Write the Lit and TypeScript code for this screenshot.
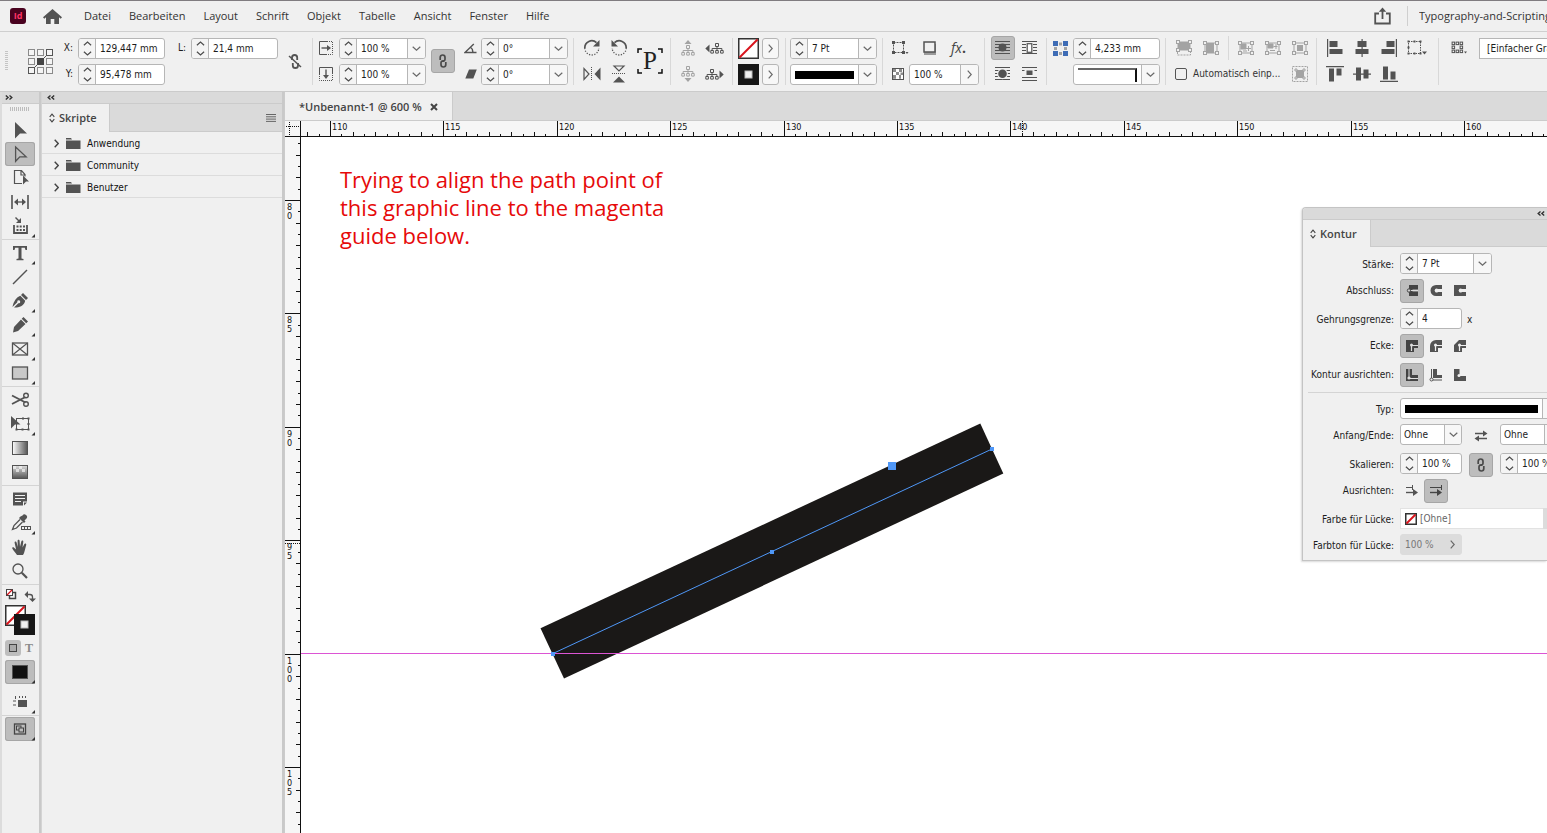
import { LitElement, html, svg, css, nothing } from "lit";
import { customElement } from "lit/decorators.js";

const icon = (w: number, h: number, body: unknown) =>
  html`<svg class="ic" width=${w} height=${h} viewBox="0 0 ${w} ${h}" aria-hidden="true">${body}</svg>`;

const G = "#535353";
const L = "#a3a3a3";

const chevDown = () => icon(9, 5, svg`<path d="M.7 .7L4.5 4.2L8.3 .7" fill="none" stroke="#6a6a6a" stroke-width="1.2"/>`);
const chevRight = () => icon(5, 9, svg`<path d="M.7 .7L4.2 4.5L.7 8.3" fill="none" stroke="#6a6a6a" stroke-width="1.2"/>`);
const spinUp = () => icon(9, 5, svg`<path d="M.9 4.3L4.5 1L8.1 4.3" fill="none" stroke="#4c4c4c" stroke-width="1.2"/>`);
const spinDown = () => icon(9, 5, svg`<path d="M.9 .7L4.5 4L8.1 .7" fill="none" stroke="#4c4c4c" stroke-width="1.2"/>`);
const dblLeft = () => icon(8, 5, svg`<path d="M3.5 .5L1.2 2.5L3.5 4.5M7.2 .5L4.9 2.5L7.2 4.5" fill="none" stroke="#333" stroke-width="1.4"/>`);
const dblRight = () => icon(8, 5, svg`<path d="M.8 .5L3.1 2.5L.8 4.5M4.5 .5L6.8 2.5L4.5 4.5" fill="none" stroke="#333" stroke-width="1.4"/>`);
const diamond = () => icon(6, 10, svg`<path d="M.7 3.8L3 1.2L5.3 3.8M.7 6.2L3 8.8L5.3 6.2" fill="none" stroke="#444" stroke-width="1.1"/>`);

const link = () =>
  icon(8, 14, svg`<path d="M1.2 6V3.4a2.3 2.3 0 0 1 4.8 0v1.8a2 2 0 0 1-2.6 1.9M6.8 8v2.6a2.3 2.3 0 0 1-4.8 0V8.8a2 2 0 0 1 2.6-1.9" fill="none" stroke="#4a4a4a" stroke-width="1.7"/>`);
const unlink = () =>
  icon(14, 17, svg`<path d="M4 7V4.6a2.6 2.6 0 0 1 5.2 0V7M10 10v2.4a2.6 2.6 0 0 1-5.2 0V10" fill="none" stroke="${G}" stroke-width="1.8"/><path d="M1 3L13 14" stroke="${G}" stroke-width="1.5"/>`);

const scaleX = () =>
  icon(14, 14, svg`<path d="M8 .5H.5v13H8" fill="none" stroke="${G}"/><path d="M8 .5h5.5v13H8" fill="none" stroke="${G}" stroke-dasharray="1 1"/><path d="M2.5 7h7" stroke="${G}" stroke-width="1.4"/><path d="M8 4l4 3l-4 3z" fill="${G}"/>`);
const scaleY = () =>
  icon(14, 14, svg`<path d="M.5 7V.5h13V7" fill="none" stroke="${G}"/><path d="M.5 7v6.5h13V7" fill="none" stroke="${G}" stroke-dasharray="1 1"/><path d="M7 2.5v7" stroke="${G}" stroke-width="1.4"/><path d="M4 8l3 4l3-4z" fill="${G}"/>`);
const angle = () =>
  icon(13, 11, svg`<path d="M12.5 9.5H1L9.8 1M6.2 4a6 6 0 0 1 2.6 5.5" fill="none" stroke="${G}" stroke-width="1.4"/>`);
const shear = () => icon(12, 10, svg`<path d="M4 .5h7.8L8.3 9.5H.3z" fill="${G}"/>`);

const rotCw = () =>
  icon(18, 18, svg`<path d="M1.8 9A7 7 0 0 1 13.5 3.6" fill="none" stroke="${G}" stroke-width="1.7"/><path d="M16.5 1v6.5h-6.5z" fill="${G}"/><path d="M1.8 9a7 7 0 0 0 14 0" fill="none" stroke="${G}" stroke-width="1.3" stroke-dasharray="1.2 1.5"/>`);
const rotCcw = () =>
  icon(18, 18, svg`<path d="M16.2 9A7 7 0 0 0 4.5 3.6" fill="none" stroke="${G}" stroke-width="1.7"/><path d="M1.5 1v6.5h6.5z" fill="${G}"/><path d="M16.2 9a7 7 0 0 1-14 0" fill="none" stroke="${G}" stroke-width="1.3" stroke-dasharray="1.2 1.5"/>`);
const flipH = () =>
  icon(18, 16, svg`<path d="M1 2.5v11L6 8z" fill="none" stroke="${G}" stroke-width="1.2"/><path d="M8.5 1v14" stroke="${G}" stroke-dasharray="1 1"/><path d="M17.5 1.5v13L11.5 8z" fill="${G}"/>`);
const flipV = () =>
  icon(16, 18, svg`<path d="M3 1h10L8 6z" fill="none" stroke="${G}" stroke-width="1.2"/><path d="M1 8.5h14" stroke="${G}" stroke-dasharray="1 1"/><path d="M2 17.5h12L8 11.5z" fill="${G}"/>`);
const refP = () =>
  html`<span class="refp"><svg width="26" height="26" viewBox="0 0 26 26" aria-hidden="true"><path d="M1 5V1h4M21 1h4v4M25 21v4h-4M5 25H1v-4" fill="none" stroke="#111" stroke-width="1.5"/></svg><span>P</span></span>`;

const tree = (c: string) =>
  svg`<path d="M5.5 .5h3v3h-3zM.8 7.5h2.6v2.6H.8zM5.7 7.5h2.6v2.6H5.7zM10.6 7.5h2.6v2.6h-2.6zM7 3.5v4M2.1 7.5v-2h9.8v2" fill="none" stroke="${c}"/>`;
const treeUp = () => icon(14, 16, svg`<path d="M3.5 4L7 0l3.5 4z" fill="${L}"/><g transform="translate(0 5)">${tree(L)}</g>`);
const treeDown = () => icon(14, 16, svg`${tree(L)}<path d="M3.5 12L7 16l3.5-4z" fill="${L}"/>`);
const treeLeft = () => icon(19, 11, svg`<path d="M4.5 1.5v8L.3 5.5z" fill="${G}"/><g transform="translate(5 0)">${tree(G)}</g>`);
const treeRight = () => icon(19, 11, svg`${tree(G)}<path d="M14.5 1.5v8l4.2-4z" fill="${G}"/>`);

const swNone = (n: number) =>
  icon(n, n, svg`<rect x=".75" y=".75" width="${n - 1.5}" height="${n - 1.5}" fill="#fff" stroke="#333" stroke-width="1.5"/><path d="M1.5 ${n - 1.5}L${n - 1.5} 1.5" stroke="#d8141c" stroke-width="2"/>`);
const swStroke = (n: number) =>
  icon(n, n, svg`<rect width="${n}" height="${n}" fill="#161616"/><rect x="${n / 2 - 3.5}" y="${n / 2 - 3.5}" width="7" height="7" fill="#f0f0f0" stroke="#bbb"/>`);

const frameFx = () =>
  icon(17, 16, svg`<rect x="1.5" y="2.5" width="10" height="10" fill="none" stroke="${G}" stroke-dasharray="2 1"/><path d="M0 1h3v3H0zM10 1h3v3h-3zM0 11h3v3H0zM10 11h3v3h-3z" fill="${G}"/><path d="M13.5 12h3l-1.5 2z" fill="${G}"/>`);
const dropSh = () =>
  icon(14, 14, svg`<path d="M1 3h12v11H1z" fill="#9a9a9a"/><rect x="1" y="1" width="11" height="10" fill="#f0f0f0" stroke="${G}" stroke-width="1.5"/>`);
const fx = () => html`<span class="fx">fx<small>.</small></span>`;
const checker = () =>
  icon(12, 12, svg`<rect x=".5" y=".5" width="11" height="11" fill="#fff" stroke="${G}"/><path d="M1 1h3v3H1zM7 1h3v3H7zM4 4h3v3H4zM8.5 4.5h2.5v2.5H8.5zM1 7h3v3.8H1zM7 7h2v3.8H7z" fill="#8d8d8d"/>`);

const rules = [1, 4, 7, 10, 13].map((y) => svg`<path d="M0 ${y - 0.5}h15" stroke="${G}"/>`);
const wrapNone = () => icon(15, 14, svg`${rules}<ellipse cx="7.5" cy="6.5" rx="4" ry="4" fill="${G}"/>`);
const wrapBox = () => icon(15, 14, svg`${rules}<rect x="4" y="2" width="7" height="10" fill="#f0f0f0"/><rect x="5.2" y="2.7" width="4.6" height="8.6" fill="#fff" stroke="${G}" stroke-width="1.2"/>`);
const wrapShape = () => icon(15, 14, svg`${rules}<circle cx="7.5" cy="6.8" r="5.4" fill="#f0f0f0"/><circle cx="7.5" cy="6.8" r="4.3" fill="${G}"/>`);
const wrapJump = () => icon(15, 14, svg`<path d="M0 .5h15M0 3.5h15M0 10.5h15M0 13.5h15" stroke="${G}"/><rect x="2.5" y="2" width="10" height="7" fill="#f0f0f0"/><rect x="4.500" y="3.500" width="6" height="4.500" fill="${G}"/>`);
const corners = () =>
  icon(15, 15, svg`<path d="M0 0h5v5H0zM10 0h5v5h-5zM0 10h5v5H0zM10 10h5v5h-5z" fill="#3e6cb5"/><path d="M6 1.5h3v3H6zM6 11h3v3H6zM1 6h3v3H1zM11 6h3v3h-3z" fill="#a3a3a3"/>`);

const handles = (w: number, h: number) =>
  svg`<rect x="2" y="2" width="${w - 4}" height="${h - 4}" fill="none" stroke="${L}"/>${[[2, 2], [w - 2, 2], [2, h - 2], [w - 2, h - 2]].map(([x, y]) => svg`<rect x="${x - 1.5}" y="${y - 1.5}" width="3" height="3" fill="#f0f0f0" stroke="${L}"/>`)}`;
const fitFill = () => icon(16, 16, svg`<path d="M2 2h12v8H2z" fill="${L}"/>${handles(16, 12)}<path d="M1.5 12v3h13v-3" fill="none" stroke="${L}" stroke-dasharray="2 1"/>`);
const fitProp = () => icon(16, 14, svg`<path d="M3 2h8v10H3z" fill="${L}"/>${handles(16, 14)}`);
const fitA = () => icon(16, 14, svg`${handles(16, 14)}<path d="M3 3h5v5H3zM8 7.5h5M10.5 5v5M5 10h4" fill="${L}" stroke="${L}"/>`);
const fitB = () => icon(16, 14, svg`${handles(16, 14)}<path d="M3 3h5v4H3zM11 3v5M8.5 5.5h4M5 9.5h5" fill="${L}" stroke="${L}"/>`);
const fitC = () => icon(16, 14, svg`${handles(16, 14)}<path d="M5 4h6v6H5z" fill="${L}"/>`);
const fitD = () => icon(16, 16, svg`<rect x=".5" y=".5" width="15" height="15" fill="none" stroke="${L}" stroke-dasharray="2 1"/><path d="M4 4h8v8H4z" fill="${L}"/><path d="M3 3h2v2H3zM11 3h2v2h-2zM3 11h2v2H3zM11 11h2v2h-2z" fill="#f0f0f0" stroke="${L}"/>`);

const alL = () => icon(16, 18, svg`<path d="M0 0h1.2v18H0zM2.5 2h8v6h-8zM2.5 10h13v5h-13z" fill="${G}"/>`);
const alC = () => icon(14, 18, svg`<path d="M6.500 0h1.2v18H6.5zM2.500 2h9v6h-9zM.5 10h13v5H.5z" fill="${G}"/>`);
const alR = () => icon(16, 18, svg`<path d="M14.8 0H16v18h-1.2zM5.5 2h8v6h-8zM.5 10h13v5H.5z" fill="${G}"/>`);
const alT = () => icon(18, 16, svg`<path d="M0 0h18v1.2H0zM3 2.5h5v13H3zM10.5 2.5h5v7h-5z" fill="${G}"/>`);
const alM = () => icon(18, 14, svg`<path d="M0 6.5h18v1.2H0zM3 .5h5v13H3zM10.5 2.5h5v9h-5z" fill="${G}"/>`);
const alB = () => icon(18, 16, svg`<path d="M0 14.8h18V16H0zM3 .5h5v13H3zM10.5 5.5h5v8h-5z" fill="${G}"/>`);
const alTo = () =>
  icon(20, 16, svg`<rect x="1.5" y="1.5" width="12" height="12" fill="none" stroke="${G}" stroke-dasharray="1.5 1"/><path d="M.5 .5h2v2h-2zM6.500 .5h2v2h-2zM12.500 .5h2v2h-2zM.5 6.500h2v2h-2zM.5 12.500h2v2h-2zM6.500 12.500h2v2h-2zM12.500 12.500h2v2h-2zM15 11.500h5l-2.500 3z" fill="${G}"/>`);
const objSt = () =>
  icon(16, 14, svg`${[[2, 2], [6, 2], [10, 2], [2, 6], [10, 6], [2, 10], [6, 10], [10, 10]].map(([x, y]) => svg`<rect x="${x - 0.9}" y="${y - 0.9}" width="2.5" height="2.5" fill="none" stroke="${G}"/>`)}<path d="M13 10.5h3l-1.5 2z" fill="${G}"/>`);

const refGrid = () =>
  icon(25, 25, svg`<path d="M7 18L18 7" stroke="${G}"/>${[0, 1, 2].flatMap((r) => [0, 1, 2].map((c) => r === 1 && c === 1
    ? svg`<rect x="9" y="9" width="7" height="7" fill="#444"/>`
    : svg`<rect x="${c * 9 + 0.5}" y="${r * 9 + 0.5}" width="6" height="6" fill="#f5f5f5" stroke="${r + c === 2 ? "#555" : "#8a8a8a"}"/>`))}`);

/* ---- tool palette ---- */
const more = svg`<path d="M30 20v3.500h-3.500z" fill="#333"/>`;
const tool = (body: unknown) => html`<svg class="ic" width="30" height="24" viewBox="0 0 30 24" aria-hidden="true">${body}</svg>`;
const tools: Record<string, unknown> = {
  Auswahl: svg`<path d="M10 4l12 11.5h-7L10 20.5z" fill="${G}"/>`,
  Direktauswahl: svg`<path d="M10.6 5l10.5 9.8h-6.3l-4.2 4.5z" fill="none" stroke="${G}" stroke-width="1.3"/>`,
  Seite: svg`<path d="M17 17.5H9.5V4.5h7l3.5 4v2M16 4.5v4.5h4" fill="none" stroke="${G}" stroke-width="1.2"/><path d="M18 9.500l6 6h-3L18 18.5z" fill="${G}"/>`,
  Lücke: svg`<path d="M7 5v14M23 5v14" stroke="${G}" stroke-width="1.6"/><path d="M10 12h10" stroke="${G}" stroke-width="1.3"/><path d="M13 8.5v7L9 12zM17 8.5v7l4-3.5z" fill="${G}"/>`,
  Inhaltsaufnahme: svg`<path d="M9 11v8h13v-8" fill="none" stroke="${G}" stroke-width="1.8"/><path d="M11.5 11.5h2v2h-2zM14.7 11.5h2v2h-2zM18 11.5h2v2h-2zM11.5 15h2v2h-2zM14.7 15h2v2h-2zM18 15h2v2h-2z" fill="${G}"/><path d="M10.5 3.5l4 4" stroke="${G}" stroke-width="1.5"/><path d="M16 4v5h-5z" fill="${G}"/>${more}`,
  Text: svg`<path d="M8 5h14v4h-1.5l-.7-2.2h-3.3v10.7l2 .5v1.2h-7v-1.2l2-.5V6.8h-3.3L9.5 9H8z" fill="${G}"/>${more}`,
  Linie: svg`<path d="M8 19L22 5" stroke="${G}" stroke-width="1.5"/>`,
  Zeichenstift: svg`<path d="M18 4l5 5-2 2-5-5zM15.3 6.8l4.9 4.9c-1 4-4 6.3-8.7 6.8H9l4.300-4.300a1.5 1.5 0 1 0-1-1L7.500 18C8.500 12.5 11.5 8.3 15.3 6.8z" fill="${G}"/>${more}`,
  Buntstift: svg`<path d="M18.5 4l4.5 4.5-1.8 1.8-4.5-4.5zM16 6.5l4.5 4.5-7.5 7-5 1.5 1-5.5z" fill="${G}"/>${more}`,
  Rechteckrahmen: svg`<rect x="7.5" y="6" width="15" height="12" fill="none" stroke="${G}" stroke-width="1.3"/><path d="M7.5 6l15 12M22.5 6l-15 12" stroke="${G}" stroke-width="1.2"/>${more}`,
  Rechteck: svg`<rect x="7.5" y="6" width="15" height="12" fill="#c9c9c9" stroke="${G}" stroke-width="1.3"/>${more}`,
  Schere: svg`<path d="M7 7.5L20.5 14.5M7 16L20.5 9" stroke="${G}" stroke-width="1.9"/><circle cx="21" cy="7.5" r="2.3" fill="none" stroke="${G}" stroke-width="1.4"/><circle cx="21" cy="16" r="2.3" fill="none" stroke="${G}" stroke-width="1.4"/>`,
  Transformieren: svg`<rect x="11.5" y="6.5" width="12" height="11" fill="none" stroke="${G}"/><path d="M17 5.500h2v2h-2zM22.500 5.500h2v2h-2zM22.500 11h2v2h-2zM22.500 16.500h2v2h-2zM16.500 16.500h2v2h-2zM10.500 16.500h2v2h-2z" fill="${G}"/><path d="M6 4l9.5 8.5h-5.5L6 16.5z" fill="${G}"/>${more}`,
  Verlauf: svg`<defs><linearGradient id="g1"><stop offset="0" stop-color="#fff"/><stop offset="1" stop-color="#555"/></linearGradient></defs><rect x="7.5" y="5.5" width="15" height="13" fill="url(#g1)" stroke="${G}"/>`,
  Verlaufsweichkante: svg`<defs><linearGradient id="g2" x2="0" y2="1"><stop offset="0" stop-color="#ddd"/><stop offset="1" stop-color="#555"/></linearGradient></defs><rect x="7.5" y="5.5" width="15" height="13" fill="url(#g2)" stroke="${G}"/><path d="M8 6h3v3H8zM14 6h3v3h-3zM11 9h3v3h-3zM17 9h3v3h-3z" fill="#f4f4f4" opacity=".7"/>`,
  Notiz: svg`<path d="M8 5.5h14v9h-4v4H8z" fill="${G}"/><path d="M19 15.5h3l-3 3z" fill="${G}"/><path d="M10 8.5h10M10 11.5h10M10 14.5h6" stroke="#f0f0f0" stroke-width="1.2"/>`,
  Pipette: svg`<path d="M17.5 4.5a2.5 2.5 0 0 1 4 3l-2 2 1 1-1.5 1.5-5-5L15.5 5.5z" fill="${G}"/><path d="M15 8.5l-6 6-1.5 4 4-1.5 6-6" fill="none" stroke="${G}" stroke-width="1.3"/><rect x="16.5" y="15.5" width="9" height="3" fill="#f0f0f0" stroke="${G}"/><path d="M19.5 15.5v3M22.5 15.5v3" stroke="${G}"/>${more}`,
  Hand: svg`<path d="M12 20c-1-2-4-4.5-4.7-6.5-.4-1.2 1-1.6 1.8-.8l2 1.8-1.5-6.7c-.2-1.4 1.6-1.7 2-.4l1.2 4.5-.2-6c0-1.4 1.9-1.4 2 0l.4 5.8 1.3-5.3c.4-1.3 2.2-1 2 .4l-.8 5.7 1.9-3.5c.7-1.1 2.2-.4 1.8.9C20 14 19.5 18 18 20z" fill="${G}"/>`,
  Zoom: svg`<circle cx="13" cy="10" r="5" fill="none" stroke="${G}" stroke-width="1.3"/><path d="M16.8 13.8L22 19" stroke="${G}" stroke-width="2.2"/>`,
};
const toolGroups = [
  ["Auswahl", "Direktauswahl", "Seite", "Lücke", "Inhaltsaufnahme"],
  ["Text", "Linie", "Zeichenstift", "Buntstift", "Rechteckrahmen", "Rechteck"],
  ["Schere", "Transformieren", "Verlauf", "Verlaufsweichkante"],
  ["Notiz", "Pipette", "Hand", "Zoom"],
];

/* ---- stroke panel ---- */
const capIcons = [
  svg`<path d="M4 1h9v4.500H7.500v2H13V12H4z" fill="#444"/><circle cx="4" cy="6.5" r="1.7" fill="#ccc" stroke="#444"/><path d="M6 6.5h7" stroke="#ddd"/>`,
  svg`<path d="M7 1h6v4H9a2 2 0 1 0 0 3h4v4H7a5.5 5.5 0 0 1 0-11z" fill="${G}"/><path d="M8 6.5h5" stroke="#f0f0f0"/>`,
  svg`<path d="M1 1h12v4H9a2 2 0 1 0 0 3h4v4H1z" fill="${G}"/><path d="M8 6.5h5" stroke="#f0f0f0"/>`,
];
const joinTail = (c: string) => svg`<path d="M6.5 12V6.5H13" fill="none" stroke="${c}" stroke-width="1.2"/><circle cx="6.5" cy="6" r="1.5" fill="${c}"/>`;
const joinIcons = [
  svg`<path d="M1 1h12v8H9v4H1z" fill="#444"/>${joinTail("#ddd")}`,
  svg`<path d="M7 1h6v8H9v4H1V7a6 6 0 0 1 6-6z" fill="${G}"/>${joinTail("#f0f0f0")}`,
  svg`<path d="M6 1h7v8H9v4H1V6z" fill="${G}"/>${joinTail("#f0f0f0")}`,
];
const alignIcons = [
  svg`<path d="M1 1h6v6h6v6H1z" fill="#444"/><path d="M4 1v9.5h9" fill="none" stroke="#ddd"/><circle cx="4" cy="10" r="1.6" fill="#ddd"/>`,
  svg`<path d="M4 1h4v6h5v3H4z" fill="${G}"/><path d="M2.5 1v11h10.5" fill="none" stroke="${G}"/><circle cx="2.5" cy="11.5" r="1.5" fill="#f0f0f0" stroke="${G}"/>`,
  svg`<path d="M1 1h6v6h6v6H1z" fill="${G}"/><path d="M7 1v6.5h6" fill="none" stroke="#f0f0f0"/><circle cx="6" cy="7.5" r="1.5" fill="#f0f0f0"/>`,
];
const arrowIcons = [
  svg`<path d="M1 3.5h6M7.5 1v5" stroke="${G}" stroke-width="1"/><path d="M1 8.5h8" stroke="${G}" stroke-width="1.4"/><path d="M8 5l5 3.5L8 12z" fill="${G}"/>`,
  svg`<path d="M1 3.5h11M12.5 1v5" stroke="#444" stroke-width="1"/><path d="M1 8.5h8" stroke="#444" stroke-width="1.4"/><path d="M8 5l5 3.5L8 12z" fill="#444"/>`,
];

/* ---- rulers ---- */
const MM = 22.68;
const range = (a: number, b: number, s: number) => Array.from({ length: Math.round((b - a) / s) + 1 }, (_, i) => a + i * s);

@customElement("app-root")
export class AppRoot extends LitElement {
  static styles = css`
    :host {
      display: flex; flex-direction: column; height: 100vh; overflow: hidden;
      background: #f0f0f0; color: #1c1c1c;
      font: 10px/14px "DejaVu Sans Condensed", "Open Sans", sans-serif;
    }
    * { box-sizing: border-box; }
    button, input, select { font: inherit; color: inherit; margin: 0; padding: 0; border: 0; background: none; border-radius: 0; outline: 0; }
    button { display: flex; align-items: center; justify-content: center; }
    .ic { display: block; flex: none; }
    a { color: inherit; text-decoration: none; }

    .menu {
      flex: none; display: flex; align-items: center; height: 32px; padding-left: 10px; white-space: nowrap;
      border-top: 1px solid #807c80; border-bottom: 1px solid #cfcfcf; font: 11px/16px "Open Sans", sans-serif; color: #333;
    }
    .logo { width: 16px; height: 16px; border-radius: 3px; background: #49021f; color: #ff3366; font: 700 9px/15px "Open Sans", sans-serif; text-align: center; }
    .home { margin-left: 17px; }
    .menu nav { display: flex; gap: 18px; margin-left: 22px; }
    .share { margin-left: auto; }
    .rule { width: 1px; height: 20px; background: #cfcfcf; margin: 0 11px 0 16px; }
    .ws { width: 128px; overflow: hidden; justify-content: flex-start; }

    .bar { flex: none; display: flex; align-items: flex-start; height: 60px; padding-top: 4px; overflow: hidden; border-bottom: 1px solid #cbcbcb; }
    .grp { flex: none; display: grid; grid-template-rows: 24px 24px; row-gap: 2px; align-items: center; justify-items: center; }
    .sep { flex: none; width: 1px; height: 47px; margin-top: 2px; background: #d8d8d8; }
    .tall { grid-row: 1 / 3; }
    .k1 { grid-column: 1; }
    .k2 { grid-column: 2; }
    .k3 { grid-column: 3; }
    .k7 { grid-column: 7; }
    .g1 { grid-template-columns: 23px 36px 14px 87px 26px 87px 34px; padding-left: 5px; }
    .g1 label { justify-self: end; padding-right: 5px; }
    .g1 .start { justify-self: start; }
    .g2 { grid-template-columns: 26px 87px 34px 21px 87px; padding-right: 5px; }
    .g3 { grid-template-columns: 27px 27px 36px; padding: 0 2px 0 4px; }
    .g4 { grid-template-columns: 27px 27px; padding: 0 4px 0 3px; }
    .g5 { grid-template-columns: 21px 17px; column-gap: 3px; padding: 0 6px 0 5px; }
    .g6 { grid-template-columns: 87px; padding: 0 5px 0 4px; }
    .g7 { grid-template-columns: 93px; padding: 0 5px 0 3px; }
    .g7 .r { display: flex; align-items: center; width: 100%; height: 24px; }
    .g7 .c29 { width: 29px; }
    .g7 .c23 { flex: none; width: 23px; display: grid; place-items: center; }
    .g8 { grid-template-columns: 27px 27px; padding: 0 3px 0 4px; }
    .g9 { grid-template-columns: 26px 87px; padding-right: 5px; }
    .g10 { grid-template-columns: 27px 27px 8px 27px 27px 27px; padding: 0 3px 0 4px; }
    .g10 .thin { width: 1px; height: 24px; background: #d8d8d8; }
    .chk { grid-column: 1 / 6; justify-self: start; display: flex; align-items: center; gap: 6px; padding-left: 5px; color: #333; }
    .chk input { appearance: none; width: 12px; height: 12px; border: 1px solid #555; border-radius: 2px; }
    .g11 { grid-template-columns: 27px 27px 27px 30px; padding: 0 6px 0 4px; }
    .g12 { flex: 1; grid-template-columns: 40px 180px; }

    .grip { width: 3px; height: 20px; background: repeating-linear-gradient(#c4c4c4 0 1px, transparent 1px 2px); }
    .ib { width: 24px; height: 24px; border-radius: 3px; border: 1px solid transparent; }
    .on { background: #bdbdbd; border-color: #a6a6a6; }
    .refp { display: grid; place-items: center; font: 25px/26px "Liberation Serif", serif; color: #222; }
    .refp > * { grid-area: 1 / 1; }
    .fx { font: italic 14px/16px "Open Sans", sans-serif; color: #444; }
    .fx small { font: 700 14px/10px "Open Sans", sans-serif; }

    .field, .sel {
      display: flex; height: 21px; width: 100%; border: 1px solid #b6b6b6; border-radius: 3px; background: #fff; overflow: hidden;
    }
    .grp .field, .grp .sel { align-self: start; margin-top: 2px; }
    .g7 .r .field { flex: 1; width: auto; }
    .spin { flex: none; width: 17px; display: grid; grid-template-rows: 1fr 1fr; background: #f4f4f4; border-right: 1px solid #b6b6b6; }
    .field input { flex: 1; min-width: 0; padding: 1px 0 0 4px; }
    .dd { flex: none; width: 18px; background: #f7f7f7; border-left: 1px solid #b6b6b6; }
    .strokeb { flex: 1; padding: 0 4px; }
    .strokeb i { display: block; width: 100%; height: 8px; background: #000; }
    .strokeb .cn { height: 14px; background: none; border-top: 2px solid #666; border-right: 2px solid #111; }
    .sq { width: 17px; height: 21px; border: 1px solid #b6b6b6; border-radius: 3px; background: #f7f7f7; align-self: start; margin-top: 2px; }
    .sw { align-self: start; margin-top: 2px; }
    .sel { display: grid; grid-template-columns: 1fr 17px; }
    .sel select { appearance: none; grid-area: 1 / 1 / 2 / 3; padding-left: 3px; }
    .sel span { grid-area: 1 / 2; display: grid; place-items: center; background: #f7f7f7; border-left: 1px solid #b6b6b6; pointer-events: none; }
    .g12 .sel { border-radius: 0; }
    .g12 select { padding-left: 7px; }

    .work { flex: 1; min-height: 0; display: grid; grid-template-columns: 41px 243px 1fr; }
    .strip { height: 12px; background: #dadada; display: flex; align-items: center; border-bottom: 1px solid #cbcbcb; }
    .palette { border-left: 2px solid #dcdcdc; border-right: 2px solid #c9c9c9; }
    .palette .strip { padding-left: 3px; }
    .tg { display: flex; flex-direction: column; align-items: flex-start; padding-left: 3px; }
    .hgrip { height: 14px; padding: 3px 0 0 8px; }
    .hgrip i { display: block; width: 20px; height: 4px; background: repeating-linear-gradient(90deg, #bcbcbc 0 1px, transparent 1px 2px); }
    .tb { width: 30px; height: 24px; border-radius: 3px; }
    .tb.on { box-shadow: inset 0 0 0 1px #a6a6a6; }
    .hr { height: 3px; padding-top: 1px; }
    .hr::before { content: ""; display: block; height: 1px; background: #d4d4d4; }
    .fmt { display: flex; padding: 4px 0 4px 3px; }
    .fmt button { width: 16px; height: 16px; border-radius: 3px; font: 700 12px/14px "Liberation Serif", serif; color: #8a8a8a; }
    .fill { margin-bottom: 6px; }

    .scripts { border-left: 1px solid #d4d4d4; border-right: 2px solid #c9c9c9; }
    .scripts .strip { padding-left: 5px; }
    .tabs { display: flex; height: 28px; background: #dadada; border-bottom: 1px solid #cbcbcb; align-items: stretch; }
    .tab { display: flex; align-items: center; gap: 4px; width: 68px; padding-left: 7px; margin-bottom: -1px; background: #f0f0f0; border-right: 1px solid #cbcbcb; font: 600 11px/16px "Open Sans", sans-serif; color: #444; }
    .burger { margin: 0 6px 0 auto; }
    .list { list-style: none; margin: 0; padding: 0; }
    .list li { height: 22px; border-bottom: 1px solid #dcdcdc; display: flex; align-items: center; padding: 2px 0 0 12px; color: #111; }
    .list .ic + .ic { margin-left: 7px; }
    .list span { margin-left: 6px; }

    .doc { display: grid; grid-template-columns: 16px 1fr; grid-template-rows: 29px 16px 1fr; min-width: 0; min-height: 0; position: relative; border-left: 1px solid #cbcbcb; }
    .dtabs { grid-column: 1 / 3; display: flex; background: #dadada; border-bottom: 1px solid #cbcbcb; }
    .dtab { display: flex; align-items: center; gap: 8px; width: 168px; padding: 1px 0 0 14px; background: #f0f0f0; border-right: 1px solid #cbcbcb; font: 600 11px/16px "Open Sans", sans-serif; color: #444; white-space: nowrap; }
    .corner { border-right: 1px solid #111; border-bottom: 1px solid #111; background: #f6f6f6; }
    .hr-ruler { border-bottom: 1px solid #111; background: #f6f6f6; min-width: 0; overflow: hidden; }
    .vr-ruler { border-right: 1px solid #111; background: #f6f6f6; min-height: 0; overflow: hidden; }
    .hr-ruler svg, .vr-ruler svg, .canvas svg { display: block; width: 100%; height: 100%; }
    .tick { font: 9px "DejaVu Sans Condensed", "Open Sans", sans-serif; fill: #111; }
    .canvas { position: relative; background: #fff; overflow: hidden; min-width: 0; min-height: 0; }
    .note { position: absolute; left: 39px; top: 28px; margin: 0; color: #e60a0a; font: 22px/28px "Open Sans", sans-serif; white-space: pre-line; }

    .panel { position: absolute; top: 115px; right: 0; width: 245px; overflow: hidden; background: #f0f0f0; border: 1px solid #c4c4c4; border-right: 0; border-radius: 4px 0 0 0; box-shadow: -1px 1px 2px rgba(0, 0, 0, .15); }
    .panel .strip { justify-content: flex-end; padding-right: 2px; }
    .panel .tabs { height: 27px; }
    .rows { display: flex; flex-direction: column; gap: 5px; padding: 6px 0 5px; }
    .row { display: flex; align-items: flex-start; height: 21px; }
    .row.b { height: 24px; }
    .row > label, .row > .lb { flex: none; width: 97px; padding-right: 6px; text-align: right; line-height: 23px; white-space: nowrap; }
    .row.b > .lb { line-height: 24px; }
    .row > .field, .row > .sel { flex: none; }
    .row > .w92 { width: 92px; }
    .row > .w62 { width: 62px; }
    .row > .w160 { width: 161px; }
    .unit { padding-left: 5px; line-height: 24px; }
    .mid { flex: none; width: 38px; display: flex; justify-content: center; height: 24px; align-items: center; }
    .line { height: 1px; margin: 0 0 0 5px; background: #d4d4d4; }
    .gap { flex: none; display: flex; align-items: center; gap: 3px; width: 143px; height: 21px; padding-left: 4px; background: #fff; color: #666; border: 1px solid #e2e2e2; border-right: 0; justify-content: flex-start; }
    .rest { flex: 1; height: 21px; background: #dcdcdc; }
    .dis { background: #dcdcdc; color: #777; border-color: #dcdcdc; }
    .dis .dd { background: none; border: 0; }
  `;

  private field(id: string, value: string, opt: { cls?: string; label?: string; spin?: boolean; drop?: "down" | "right"; disabled?: boolean } = {}) {
    const { cls = "", label, spin = true, drop, disabled = false } = opt;
    return html`<div class="field ${cls} ${disabled ? "dis" : ""}">
      ${spin ? html`<span class="spin"><button aria-label="Erhöhen">${spinUp()}</button><button aria-label="Verringern">${spinDown()}</button></span>` : nothing}
      <input id=${id} .value=${value} aria-label=${label ?? nothing} ?disabled=${disabled} />
      ${drop ? html`<button class="dd" aria-label="Auswahl öffnen">${drop === "down" ? chevDown() : chevRight()}</button>` : nothing}
    </div>`;
  }

  private ib(label: string, body: unknown, cls = "") {
    return html`<button class="ib ${cls}" aria-label=${label}>${body}</button>`;
  }

  private select(id: string, value: string, cls = "", label?: string) {
    return html`<div class="sel ${cls}"><select id=${id} aria-label=${label ?? nothing}><option>${value}</option></select><span>${chevDown()}</span></div>`;
  }

  private strokePick(label: string, cls = "", corner = false) {
    return html`<div class="field ${cls}"><button class="strokeb" aria-label=${label}><i class=${corner ? "cn" : ""}></i></button><button class="dd" aria-label="Auswahl öffnen">${chevDown()}</button></div>`;
  }

  private menuBar() {
    return html`<header class="menu">
      <span class="logo">Id</span>
      <a class="home" href="#" aria-label="Startseite">${icon(19, 17, svg`<path d="M9.5 1L0 9.3l1.3 1.4L3 9.3V16h4.7v-5h3.6v5H16V9.3l1.7 1.4L19 9.3z" fill="${G}"/>`)}</a>
      <nav>${["Datei", "Bearbeiten", "Layout", "Schrift", "Objekt", "Tabelle", "Ansicht", "Fenster", "Hilfe"].map((m) => html`<a href="#">${m}</a>`)}</nav>
      <button class="share" aria-label="Freigeben">${icon(17, 18, svg`<path d="M5 6.5H1.2v10h14.6v-10H12" fill="none" stroke="${G}" stroke-width="1.8"/><path d="M8.5 12V3" stroke="${G}" stroke-width="1.8"/><path d="M4.8 4.8L8.5 .5l3.7 4.3z" fill="${G}"/>`)}</button>
      <span class="rule"></span>
      <button class="ws">Typography-and-Scripting</button>
    </header>`;
  }

  private controlBar() {
    const sep = html`<i class="sep"></i>`;
    return html`<section class="bar">
      <div class="grp g1">
        <i class="grip tall start k1"></i><span class="tall start k2">${refGrid()}</span>
        <label for="x">X:</label>${this.field("x", "129,447 mm")}
        <label for="l">L:</label>${this.field("l", "21,4 mm")}
        <button class="tall k7" aria-label="Proportionen">${unlink()}</button>
        <label for="y">Y:</label>${this.field("y", "95,478 mm")}
      </div>${sep}
      <div class="grp g2">
        ${scaleX()}${this.field("sx", "100 %", { label: "Skalierung X", drop: "down" })}
        <span class="tall k3">${this.ib("Verknüpfen", link(), "on")}</span>
        ${angle()}${this.field("rot", "0°", { label: "Drehwinkel", drop: "down" })}
        ${scaleY()}${this.field("sy", "100 %", { label: "Skalierung Y", drop: "down" })}
        ${shear()}${this.field("shear", "0°", { label: "Scherwinkel", drop: "down" })}
      </div>${sep}
      <div class="grp g3">
        ${this.ib("Drehen", rotCw())}${this.ib("Gegen Uhrzeigersinn", rotCcw())}<span class="tall k3">${refP()}</span>
        ${this.ib("Horizontal spiegeln", flipH())}${this.ib("Vertikal spiegeln", flipV())}
      </div>${sep}
      <div class="grp g4">
        ${this.ib("Container", treeUp())}${this.ib("Vorheriges", treeLeft())}
        ${this.ib("Inhalt", treeDown())}${this.ib("Nächstes", treeRight())}
      </div>${sep}
      <div class="grp g5">
        <button class="sw" aria-label="Fläche">${swNone(21)}</button><button class="sq" aria-label="Flächenoptionen">${chevRight()}</button>
        <button class="sw" aria-label="Kontur">${swStroke(21)}</button><button class="sq" aria-label="Konturoptionen">${chevRight()}</button>
      </div>${sep}
      <div class="grp g6">
        ${this.field("sw", "7 Pt", { label: "Konturstärke", drop: "down" })}
        ${this.strokePick("Konturtyp")}
      </div>${sep}
      <div class="grp g7">
        <div class="r"><button class="c29" aria-label="Effekt auf Objekt">${frameFx()}</button><button class="c29" aria-label="Schlagschatten">${dropSh()}</button><button class="c29" aria-label="Effekte">${fx()}</button></div>
        <div class="r"><span class="c23">${checker()}</span>${this.field("op", "100 %", { label: "Deckkraft", spin: false, drop: "right" })}</div>
      </div>${sep}
      <div class="grp g8">
        ${this.ib("Kein Textumfluss", wrapNone(), "on")}${this.ib("Umfließen Rahmen", wrapBox())}
        ${this.ib("Umfließen Form", wrapShape())}${this.ib("Objekt überspringen", wrapJump())}
      </div>${sep}
      <div class="grp g9">
        ${corners()}${this.field("cr", "4,233 mm", { label: "Eckengröße" })}
        <span></span>${this.strokePick("Eckenform", "", true)}
      </div>${sep}
      <div class="grp g10">
        ${this.ib("Rahmen füllen", fitFill())}${this.ib("Proportional", fitProp())}<i class="thin"></i>
        ${this.ib("Inhalt anpassen", fitA())}${this.ib("Rahmen anpassen", fitB())}${this.ib("Zentrieren", fitC())}
        <label class="chk"><input type="checkbox" />Automatisch einp...</label>${this.ib("Inhaltsbewusst", fitD())}
      </div>${sep}
      <div class="grp g11">
        ${this.ib("Links", alL())}${this.ib("Mitte", alC())}${this.ib("Rechts", alR())}${this.ib("Ausrichten an", alTo())}
        ${this.ib("Oben", alT())}${this.ib("Vertikal Mitte", alM())}${this.ib("Unten", alB())}
      </div>${sep}
      <div class="grp g12">${this.ib("Objektformat", objSt())}${this.select("os", "[Einfacher Grafikrahmen]", "", "Objektformat")}</div>
    </section>`;
  }

  private palette() {
    return html`<aside class="palette">
      <div class="strip">${dblRight()}</div>
      <div class="hgrip"><i></i></div>
      ${toolGroups.map((g) => html`<div class="tg">${g.map((t) => html`<button class="tb ${t === "Direktauswahl" ? "on" : ""}" aria-label=${t}>${tool(tools[t])}</button>`)}</div><div class="hr"></div>`)}
      ${icon(36, 50, svg`
        <rect x="7.5" y="6.5" width="6" height="6" fill="#f0f0f0" stroke="#444" stroke-width="1.5"/>
        <rect x="4.5" y="3.5" width="6" height="6" fill="#fff" stroke="#444"/><path d="M5 9L10 4" stroke="#d8141c" stroke-width="1.3"/>
        <path d="M25 8.5h3q2.5 0 2.5 2.5v3" fill="none" stroke="${G}" stroke-width="1.3"/><path d="M26 5v7l-3.5-3.5zM27 12.5h7L30.5 16z" fill="${G}"/>
        <rect x="3.75" y="19.75" width="19.5" height="19.5" fill="#fff" stroke="#333" stroke-width="1.5"/><path d="M4.5 38.5L22.5 20.5" stroke="#d8141c" stroke-width="2"/>
        <rect x="12" y="28" width="21" height="21" fill="#161616"/><rect x="19" y="35" width="7" height="7" fill="#f0f0f0" stroke="#bbb"/>`)}
      <div class="fmt"><button class="on" aria-label="Container">${icon(8, 8, svg`<rect x=".5" y=".5" width="7" height="7" fill="#aaa" stroke="#444"/>`)}</button><button>T</button></div>
      <div class="tg">
        <button class="tb on fill" aria-label="Farbe anwenden">${tool(svg`<rect x="7.5" y="5.5" width="15" height="13" fill="#111" stroke="#555"/>${more}`)}</button>
        <button class="tb" aria-label="Ansichtsoptionen">${tool(svg`<path d="M13 10h9v7h-9z" fill="${G}"/><path d="M10.5 6v3M14.5 6v2M17.5 6v2M20.5 6v2M8 11h3M8 15h3" stroke="${G}"/>${more}`)}</button>
      </div>
      <div class="hr"></div>
      <div class="tg"><button class="tb on" aria-label="Bildschirmmodus">${tool(svg`<rect x="9.5" y="7" width="11" height="10" fill="none" stroke="#444" stroke-width="1.3"/><rect x="11.5" y="9" width="4.5" height="4" fill="none" stroke="#444"/><rect x="14" y="11" width="4.5" height="4" fill="#bdbdbd" stroke="#444"/>${more}`)}</button></div>
    </aside>`;
  }

  private scripts() {
    return html`<aside class="scripts">
      <div class="strip">${dblLeft()}</div>
      <div class="tabs"><div class="tab">${diamond()}Skripte</div><button class="burger" aria-label="Bedienfeldmenü">${icon(10, 8, svg`<path d="M0 .5h10M0 2.8h10M0 5.1h10M0 7.4h10" stroke="#666"/>`)}</button></div>
      <ul class="list">${["Anwendung", "Community", "Benutzer"].map((n) => html`<li>
        ${icon(5, 9, svg`<path d="M.7 .7L4.2 4.5L.7 8.3" fill="none" stroke="#444" stroke-width="1.4"/>`)}
        ${icon(15, 11, svg`<path d="M0 0h5l1 1.5H0zM0 2.5h14.5V11H0z" fill="${G}"/>`)}<span>${n}</span></li>`)}</ul>
    </aside>`;
  }

  private doc() {
    const x0 = 29, y0 = 63;
    return html`<main class="doc">
      <div class="dtabs"><div class="dtab">*Unbenannt-1 @ 600 %<button aria-label="Schließen">${icon(8, 8, svg`<path d="M1 1l6 6M7 1L1 7" stroke="#444" stroke-width="2"/>`)}</button></div></div>
      <div class="corner">${icon(15, 15, svg`<path d="M1 5.5h14M4.5 1v14" stroke="#111" stroke-dasharray="1 1"/>`)}</div>
      <div class="hr-ruler"><svg shape-rendering="crispEdges">
        ${range(109, 250, 0.5).map((m) => {
          const x = Math.round(x0 + (m - 110) * MM);
          const h = m % 5 === 0 ? 15 : m % 1 === 0 ? 4 : 2;
          return svg`<rect x=${x} y=${15 - h} width="1" height=${h} fill="#111"/>${m % 5 === 0 ? svg`<text class="tick" x=${x + 2} y="9">${m}</text>` : nothing}`;
        })}
        <path d="M721.5 0v15" stroke="#111" stroke-dasharray="1 1"/>
      </svg></div>
      <div class="vr-ruler"><svg shape-rendering="crispEdges">
        ${range(77.5, 150, 0.5).map((m) => {
          const y = Math.round(y0 + (m - 80) * MM);
          const w = m % 5 === 0 ? 15 : m % 1 === 0 ? 4 : 2;
          return svg`<rect x=${15 - w} y=${y} width=${w} height="1" fill="#111"/>${m % 5 === 0 ? [...String(m)].map((d, i) => svg`<text class="tick" x="2" y=${y + 10 + i * 9}>${d}</text>`) : nothing}`;
        })}
        <path d="M0 406.5h15" stroke="#111" stroke-dasharray="1 1"/>
      </svg></div>
      <div class="canvas">
        <svg>
          <path d="M239.500 491.3L679.3 286.5L702.3 336.5L263 541.5z" fill="#1a1817"/>
          <rect y="516" width="100%" height="1" fill="#dc55d4" shape-rendering="crispEdges"/>
          <path d="M252 516.5L691 312" stroke="#4f97f7"/>
          <path d="M250 515h4v4h-4zM689 310h4v4h-4zM469 413h4v4h-4zM587 325h8v8h-8z" fill="#4f97f7"/>
        </svg>
        <p class="note">${"Trying to align the path point of\nthis graphic line to the magenta\nguide below."}</p>
      </div>
      ${this.strokePanel()}
    </main>`;
  }

  private strokePanel() {
    const set = (names: string[], icons: unknown[], sel: number) =>
      icons.map((b, i) => this.ib(names[i], icon(14, 14, b), i === sel ? "on" : ""));
    return html`<section class="panel">
      <div class="strip">${dblLeft()}</div>
      <div class="tabs"><div class="tab">${diamond()}Kontur</div></div>
      <div class="rows">
        <div class="row"><label for="k1">Stärke:</label>${this.field("k1", "7 Pt", { cls: "w92", drop: "down" })}</div>
        <div class="row b"><span class="lb">Abschluss:</span>${set(["Abgeflacht", "Abgerundet", "Überstehend"], capIcons, 0)}</div>
        <div class="row"><label for="k2">Gehrungsgrenze:</label>${this.field("k2", "4", { cls: "w62" })}<span class="unit">x</span></div>
        <div class="row b"><span class="lb">Ecke:</span>${set(["Gehrung", "Abgerundete Ecke", "Abgeflachte Ecke"], joinIcons, 0)}</div>
        <div class="row b"><span class="lb">Kontur ausrichten:</span>${set(["Mitte", "Innen", "Außen"], alignIcons, 0)}</div>
        <div class="line"></div>
        <div class="row"><span class="lb">Typ:</span>${this.strokePick("Typ", "w160")}</div>
        <div class="row b"><label for="k3">Anfang/Ende:</label>${this.select("k3", "Ohne", "w62")}
          <button class="mid" aria-label="Tauschen">${icon(14, 12, svg`<path d="M1 3.5h9M4 8.5h9" stroke="${G}" stroke-width="1.4"/><path d="M9 .5l4.5 3L9 6.5zM5 5.5L.5 8.5L5 11.5z" fill="${G}"/>`)}</button>
          ${this.select("k4", "Ohne", "w62", "Ende")}</div>
        <div class="row"><label for="k5">Skalieren:</label>${this.field("k5", "100 %", { cls: "w62" })}
          <span class="mid">${this.ib("Verknüpfen", link(), "on")}</span>${this.field("k6", "100 %", { cls: "w62", label: "Skalieren Ende" })}</div>
        <div class="row b"><span class="lb">Ausrichten:</span>${set(["Hinter Ende", "Am Ende"], arrowIcons, 1)}</div>
        <div class="row"><span class="lb">Farbe für Lücke:</span><button class="gap">${swNone(12)}[Ohne]</button><i class="rest"></i></div>
        <div class="row"><label for="k7">Farbton für Lücke:</label>${this.field("k7", "100 %", { cls: "w62", spin: false, drop: "right", disabled: true })}</div>
      </div>
    </section>`;
  }

  render() {
    return html`${this.menuBar()}${this.controlBar()}<div class="work">${this.palette()}${this.scripts()}${this.doc()}</div>`;
  }
}
